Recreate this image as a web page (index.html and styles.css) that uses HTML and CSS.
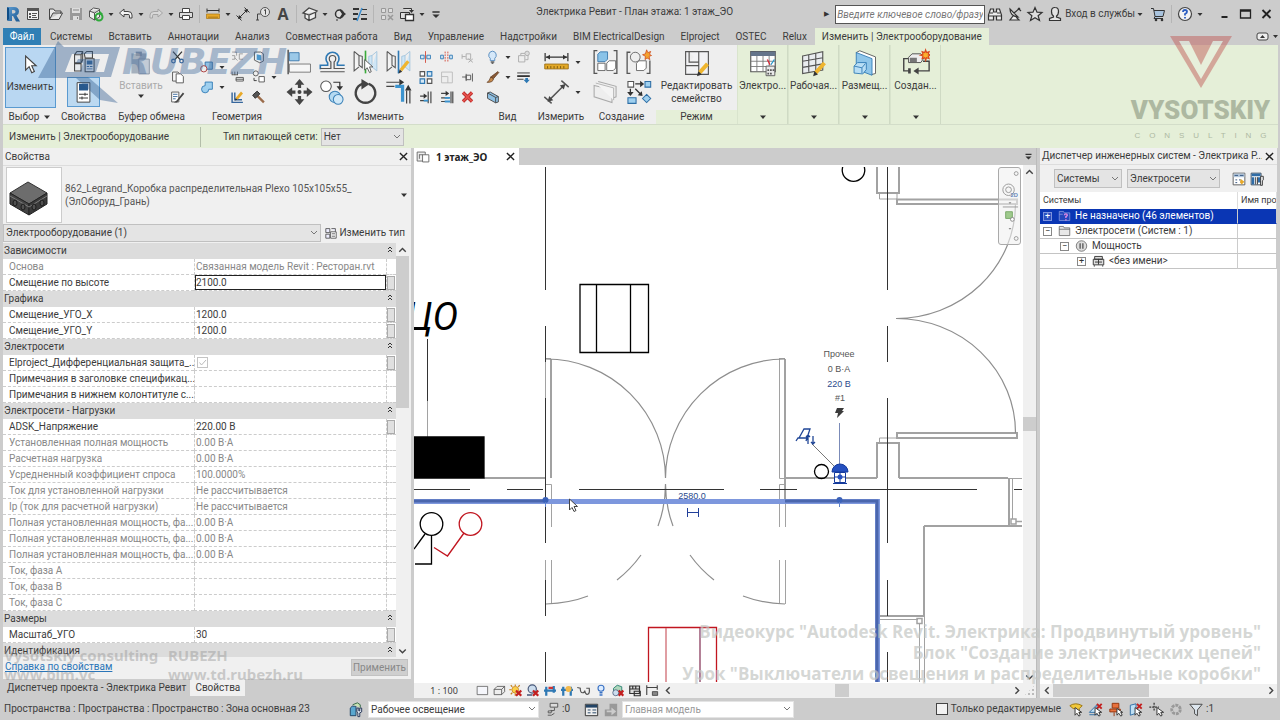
FILE: index.html
```html
<!DOCTYPE html>
<html lang="ru">
<head>
<meta charset="utf-8">
<title>Электрика Ревит - План этажа: 1 этаж_ЭО</title>
<link rel="stylesheet" href="styles.css">
</head>
<body>
<svg class="defs" aria-hidden="true">
  <defs>
    <linearGradient id="rg" x1="0" y1="0" x2="1" y2="1"><stop offset="0" stop-color="#5d9bd0"/><stop offset="1" stop-color="#17558f"/></linearGradient>
    <symbol id="revit" viewBox="0 0 20 20"><path fill="url(#rg)" fill-rule="evenodd" d="M5 3h6q5 0 5 4.500q0 3-2.500 4l3.500 6h-4l-3-5.500H9V17H5zM9 6v3.500h1.500q2 0 2-1.700T10.500 6z"/><path fill="#0f4d86" d="M4 3l2 1v11l-2 2z"/></symbol>
    <symbol id="list" viewBox="0 0 20 20"><path fill="#f2f2f2" stroke="#444" d="M4.500 4.500h11v11h-11z"/><path fill="#555" d="M4 4h12v3H4zM6 9h2v2H6zM6 12h2v2H6zM9 9h5v1H9zM9 11h4v1H9zM9 13h5v1H9z"/></symbol>
    <symbol id="open" viewBox="0 0 20 20"><path fill="#e8e8e8" stroke="#444" d="M3.500 15V5h4l1.500 2h6v2H7L3.500 15.500H13L16.500 9H14"/></symbol>
    <symbol id="save" viewBox="0 0 20 20"><path fill="#999" d="M4 4h12v12H4z"/><path fill="#ddd" d="M6 4h8v5H6zM7 12h6v4H7z"/><path fill="#888" d="M7 5.500h6v1H7zM11 13h1v2h-1z"/></symbol>
    <symbol id="sync" viewBox="0 0 20 20"><path fill="#eee" stroke="#555" d="M3.500 7l4-3 6 1v8l-5 3-5-3zM3.500 7l5 2 5-3M8.500 9v7"/><circle cx="13" cy="13" r="3.500" fill="none" stroke="#2eaa3a" stroke-width="2"/><path fill="#2eaa3a" d="M14 7l3 3-4 1z"/></symbol>
    <symbol id="undo" viewBox="0 0 20 20"><path fill="#f4f4f4" stroke="#444" stroke-linejoin="round" d="M3.500 9L8 5v2.500h4q4 0 4 3.500v3h-2.500v-2.500q0-1-1.500-1H8V13z"/></symbol>
    <symbol id="redo" viewBox="0 0 20 20"><path fill="#d8d8d8" stroke="#a4a4a4" stroke-linejoin="round" d="M16.500 9L12 5v2.500H8q-4 0-4 3.500v3h2.500v-2.500q0-1 1.500-1h4V13z"/></symbol>
    <symbol id="print" viewBox="0 0 20 20"><path fill="#fff" stroke="#444" d="M6.500 8V4.500h7V8"/><path fill="#ddd" stroke="#444" d="M3.500 8.500h13v5h-13z"/><path fill="#fff" stroke="#444" d="M6.500 11.500h7v4h-7z"/></symbol>
    <symbol id="meas" viewBox="0 0 20 20"><path stroke="#333" d="M4 6.500h12M4 4.500v4M16 4.500v4"/><path fill="#e8a928" stroke="#a87716" stroke-width=".7" d="M3.500 10h13v4.500h-13z"/><path stroke="#6d4c0b" stroke-width=".7" d="M6 12.500V14M8 12.500V14M10 12.500V14M12 12.500V14M14 12.500V14"/></symbol>
    <symbol id="dim" viewBox="0 0 20 20"><path stroke="#333" fill="none" d="M6 14L14 6M3.500 11.500l5 5M11.500 3.500l5 5"/><path fill="#333" d="M5 15l1-4 3 3zM15 5l-1 4-3-3z"/></symbol>
    <symbol id="tag" viewBox="0 0 20 20"><circle cx="12" cy="8" r="4.500" fill="#e4e4e4" stroke="#555"/><path stroke="#444" fill="none" d="M4.500 16v-6h3M12.500 10.500v-5l-1.500 1M3 16h3"/></symbol>
    <symbol id="cube3" viewBox="0 0 20 20"><path fill="#eee" stroke="#444" stroke-width="1.300" d="M3 9l6-5 8 3-1.500 1.500v5L9 16.500 5 14V9.500zM5 9.500l4 1.500 7-3M9 11v5"/></symbol>
    <symbol id="sect" viewBox="0 0 20 20"><circle cx="9.500" cy="10" r="4" fill="#ddd" stroke="#333" stroke-width="1.500"/><path fill="#333" d="M10 5l6 5-6 5v-2l2-3-2-3z"/><path stroke="#333" d="M7 15v2"/></symbol>
    <symbol id="thin" viewBox="0 0 20 20"><path stroke="#333" stroke-width="2" d="M3 5h6M3 10h5M3 15h4M11 15h6"/><path stroke="#333" d="M12 5.500h5M11 10.500h6"/><path stroke="#3d8fd0" stroke-width="1.500" d="M12 4L7 17"/></symbol>
    <symbol id="closeh" viewBox="0 0 20 20"><path fill="#ddd" stroke="#999" d="M4.500 4.500h4v4h-4zM11.500 4.500h4v4h-4zM4.500 11.500h4v4h-4z"/><path stroke="#999" stroke-width="1.500" d="M11 11l5 5M16 11l-5 5"/></symbol>
    <symbol id="switch" viewBox="0 0 20 20"><path fill="#ddd" stroke="#333" d="M3.500 8.500h9v6h-9zM6.500 5V4.500h8V8"/><path fill="#fff" stroke="#333" stroke-width="1.300" d="M8.500 10.500h8v6h-8z"/><path fill="#333" d="M12 6h5l-2.500 3z"/></symbol>
    <symbol id="dd" viewBox="0 0 10 20"><path fill="#333" d="M2.500 9h5L5 12z"/></symbol>
    <symbol id="tri" viewBox="0 0 8 8"><path fill="#333" d="M1 2.500h6L4 6z"/></symbol>
    <symbol id="up2" viewBox="0 0 8 8"><path fill="none" stroke="#333" d="M2 4l2-2 2 2M2 7l2-2 2 2"/></symbol>
    <symbol id="qmenu" viewBox="0 0 20 20"><path fill="#333" d="M6 7h8v1.500H6zM6 10.500h8L10 14.500z"/></symbol>
    <symbol id="bino" viewBox="0 0 20 20"><path fill="#eee" stroke="#333" stroke-width="1.200" d="M5.500 5h3v3h3V5h3l2 6v5h-5v-4h-3v4h-5v-5zM5 9h3M12 9h3M4 12h4M12 12h4"/></symbol>
    <symbol id="sat" viewBox="0 0 20 20"><path fill="#eee" stroke="#333" stroke-width="1.200" d="M5 5q0 7 8 8zM8 12l-3 4h9l-3-3M9 9l6-5M13 4l3 3"/></symbol>
    <symbol id="star" viewBox="0 0 20 20"><path fill="#ddd" stroke="#333" stroke-width="1.200" d="M10 3.500l2 4.700 5 .3-3.900 3.200 1.400 4.800L10 13.800l-4.500 2.700 1.400-4.800L3 8.500l5-.3z"/></symbol>
    <symbol id="user" viewBox="0 0 20 20"><path fill="#e4e4e4" stroke="#333" stroke-width="1.200" d="M10 3.500q3.500 0 3.500 3.700T11.500 12v1l4 1.500v2h-11v-2l4-1.500v-1q-2-1-2-4.800T10 3.500z"/></symbol>
    <symbol id="cart" viewBox="0 0 20 20"><path fill="#a9c3dd" stroke="#333" d="M3 4.500h2.500L7 12.500h8L16.500 6.500H6M7 12.500l-1 2h9"/><circle cx="8" cy="16" r="1.300" fill="#333"/><circle cx="14" cy="16" r="1.300" fill="#333"/></symbol>
    <symbol id="help" viewBox="0 0 20 20"><circle cx="10" cy="10" r="6.500" fill="#f3f3f3" stroke="#444" stroke-width="1.200"/><path fill="none" stroke="#2d5ec0" stroke-width="1.800" d="M8 8q0-2 2-2t2 1.800q0 1.200-2 2.200v1.500M10 13v1.500"/></symbol>

    <symbol id="arrow" viewBox="0 0 32 32"><path fill="#fff" stroke="#444" stroke-width="1.300" d="M11 7v16l4-4 3 7 3-1.500-3-6.500h5z"/></symbol>
    <symbol id="props1" viewBox="0 0 32 32"><path fill="#e6e9ec" stroke="#444" stroke-width="1.300" d="M5 7l3-4h7v11l-2 3H5zM17 6l3-3h7v8h-9zM5 18h8v9H5zM5 7h8v9M13 7l2-4"/><path fill="#fff" stroke="#444" stroke-width="1.300" d="M18 12h11v16H18z"/><path fill="#36669c" d="M20 14h7v5h-7zM20 21h3v1h-3zM24 21h3v1h-3zM20 24h7v1h-7z"/></symbol>
    <symbol id="props2" viewBox="0 0 32 32"><path fill="#fff" stroke="#444" stroke-width="1.300" d="M7.500 3.500h17v26h-17z"/><path fill="#27588d" d="M10 5h12v9H10z"/><path stroke="#333" stroke-width="1.300" d="M10 19h12M10 24h12M18 17v4M14 22v4"/></symbol>
    <symbol id="paste" viewBox="0 0 32 32"><path fill="#a5b0bd" d="M5 5h17v23H5z"/><path fill="#8894a5" d="M10 3h7v5h-7z"/><path fill="#c3cbd6" stroke="#8490a1" d="M13.500 11.500h12v17h-12z"/></symbol>
    <symbol id="cut" viewBox="0 0 20 20"><path stroke="#333" stroke-width="1.400" fill="none" d="M5 4l8 9M15 4l-8 9"/><circle cx="5.500" cy="14.500" r="2" fill="none" stroke="#36669c" stroke-width="1.400"/><circle cx="14.500" cy="14.500" r="2" fill="none" stroke="#36669c" stroke-width="1.400"/></symbol>
    <symbol id="copy" viewBox="0 0 20 20"><path fill="#f6f6f6" stroke="#555" d="M4.500 4.500h6l2 2v8h-8z"/><path fill="#fff" stroke="#555" d="M8.500 6.500h5l3 3v7h-8z"/></symbol>
    <symbol id="match" viewBox="0 0 20 20"><path fill="#fff" stroke="#555" d="M3.500 4.500h8v11h-8z"/><path stroke="#36669c" d="M5 7h5M5 9.500h5M5 12h3"/><path fill="#444" d="M16 5l1.500 1.500-6 7-2 2.500H6l3-2z"/></symbol>
    <symbol id="cope" viewBox="0 0 20 20"><path fill="#8fc1e5" stroke="#2f6fa6" d="M8.500 4.500h8v8h-8z"/><circle cx="7" cy="12" r="3.500" fill="#eee" stroke="#a33"/></symbol>
    <symbol id="join" viewBox="0 0 20 20"><path fill="#9fd0ef" stroke="#2f79b4" d="M8.500 4.500h8v8h-4a4 4 0 1 1-4-4z"/></symbol>
    <symbol id="wjoin" viewBox="0 0 20 20"><path fill="none" stroke="#999" d="M4 4.500h5v4M4 8.500h3v4h-3M16 6.500h-4v6h4M7 11l3 3"/></symbol>
    <symbol id="face" viewBox="0 0 20 20"><path fill="#e8eef3" stroke="#555" d="M5.500 4.500h7l3 2v8l-4 2-6-3z"/><path fill="#4b98cd" d="M8 7l5 1v6l-5-1z"/></symbol>
    <symbol id="beam" viewBox="0 0 20 20"><path fill="none" stroke="#555" d="M4 4v4M7 4v4M10 4v4M4 7.500h6M8.500 10.500h8v4h-8zM8 12.500h9"/></symbol>
    <symbol id="geo" viewBox="0 0 20 20"><circle cx="7" cy="6" r="2.800" fill="none" stroke="#555"/><path fill="#fff" stroke="#555" d="M10.500 9.500h6v6h-6z"/><path fill="none" stroke="#333" d="M5 11v3h3"/></symbol>
    <symbol id="edit" viewBox="0 0 20 20"><path fill="none" stroke="#36669c" stroke-width="1.600" d="M4 5v11h12M7 5v8h8"/><path stroke="#e8a928" stroke-width="3" d="M9 12l6-7"/><path fill="#333" d="M7 14l1-3 2 2z"/></symbol>
    <symbol id="hammer" viewBox="0 0 20 20"><path stroke="#9a6b4a" stroke-width="2.600" d="M9 9l7 7"/><path fill="#555" stroke="#222" d="M3.500 8l5-4.500 3 3-5 5z"/></symbol>
    <symbol id="align" viewBox="0 0 32 32"><path stroke="#333" stroke-width="1.500" d="M2 1v30"/><path fill="#9cc9e8" stroke="#2f6fa6" d="M3.500 4.500h12v10h-12z"/><path fill="#f6f6f6" stroke="#666" d="M3.500 18.500h26v10h-26z"/></symbol>
    <symbol id="offset" viewBox="0 0 32 32"><path fill="none" stroke="#2f79b4" stroke-width="2" d="M1 25V20h9v-3q-2-2-2-5a8 8 0 0 1 16 0q0 3-2 5v3h9"/><path fill="none" stroke="#555" stroke-width="1.500" d="M1 24h13v-8q-2-1-2-4a4 4 0 0 1 8 0q0 3-2 4v8h13M1 28h30"/></symbol>
    <symbol id="mir1" viewBox="0 0 32 32"><path fill="#f4f4f4" stroke="#555" stroke-width="1.300" d="M2 3l6 5v12l4 3V9l-4-1M2 3v24l6-5"/><path fill="#cfe6f6" stroke="#9cc0da" d="M30 3l-6 5v12l-4 3V9l4-1M30 3v24l-6-5"/><path stroke="#3aaa3a" stroke-width="2" d="M16 2v28"/><path fill="#fff" stroke="#444" d="M15 13v13l3-3 3 6 2-1-2-6h4z"/></symbol>
    <symbol id="mir2" viewBox="0 0 32 32"><path fill="#f4f4f4" stroke="#555" stroke-width="1.300" d="M2 3l6 5v12l4 3V9l-4-1M2 3v24l6-5"/><path fill="#cfe6f6" stroke="#9cc0da" d="M30 3l-6 5v12l-4 3V9l4-1M30 3v24l-6-5"/><path stroke="#2f79b4" stroke-width="2" d="M16 2v28"/><path stroke="#efb52e" stroke-width="4" d="M19 26l9-11"/><path fill="#333" d="M16 30l1.500-5 3 3z"/></symbol>
    <symbol id="move" viewBox="0 0 32 32"><path fill="#444" d="M16 0l6 7h-4v4h-4V7h-4zM16 32l6-7h-4v-4h-4v4h-4zM0 16l7-6v4h4v4H7v4zM32 16l-7-6v4h-4v4h4v4z"/><circle cx="16" cy="16" r="2.500" fill="#444"/></symbol>
    <symbol id="copyel" viewBox="0 0 32 32"><circle cx="8" cy="9" r="6.500" fill="#fff" stroke="#555" stroke-width="1.300"/><circle cx="19" cy="22" r="7" fill="#b4d9f1" stroke="#3c82b8" stroke-width="1.300"/><circle cx="23" cy="25" r="6" fill="#cfe8f8" stroke="#3c82b8" stroke-width="1.300"/><path fill="none" stroke="#333" stroke-width="1.500" d="M17 4h8v6"/><path fill="#333" d="M21 9h8l-4 5z"/></symbol>
    <symbol id="rot" viewBox="0 0 32 32"><path fill="none" stroke="#444" stroke-width="3" d="M20 6a12 12 0 1 1-8 0"/><path fill="#444" d="M11 0l10 6-10 7z"/></symbol>
    <symbol id="trimc" viewBox="0 0 32 32"><path fill="none" stroke="#444" stroke-width="1.500" d="M1 4h16M1 9h10M26 30V14M30 30V14"/><path fill="none" stroke="#3c94cf" stroke-width="4" d="M12 9h9v19"/><path fill="#333" d="M17 0l6 4-6 4zM24 14l4-7 4 7z"/></symbol>
    <symbol id="split" viewBox="0 0 20 20"><path fill="#d7e9f6" stroke="#2f79b4" d="M4.500 8h4v4h-4zM11.500 8h4v4h-4z"/><path stroke="#d24a3a" d="M10 3.500v13"/></symbol>
    <symbol id="splitg" viewBox="0 0 20 20"><path fill="#d7e9f6" stroke="#2f79b4" d="M3.500 8h3v4h-3zM13.500 8h3v4h-3z"/><path stroke="#d24a3a" stroke-dasharray="2 1" d="M8.500 4v12M11.500 4v12"/></symbol>
    <symbol id="unpin" viewBox="0 0 20 20"><path fill="#eee" stroke="#aaa" d="M4 7v5M8.500 6.500h5v6h-5zM4 9.500h4M11 12l5 4M16 12l-5 4"/></symbol>
    <symbol id="array" viewBox="0 0 20 20"><path fill="#fff" stroke="#555" stroke-width="1.300" d="M4 4h5v5H4zM12 12h5v5h-5z"/><path fill="#d7e9f6" stroke="#2f79b4" stroke-width="1.300" d="M12 4h5v5h-5zM4 12h5v5H4z"/></symbol>
    <symbol id="scale" viewBox="0 0 20 20"><path fill="#eee" stroke="#bbb" d="M4.500 4.500h12v12h-12zM4.500 9.500h7v7"/></symbol>
    <symbol id="pin" viewBox="0 0 20 20"><path fill="#eee" stroke="#555" d="M4 10h5M8.500 6.500v8M8.500 8h5v5h-5zM15.500 6v9"/></symbol>
    <symbol id="trim1" viewBox="0 0 20 20"><path fill="none" stroke="#444" stroke-width="1.300" d="M4 9h5M13 4v13M16 4v13M4 14h9"/><path fill="#333" d="M8 6l4 3-4 3z"/><path stroke="#3c94cf" stroke-width="2" d="M8 14h5"/></symbol>
    <symbol id="trim2" viewBox="0 0 20 20"><path fill="none" stroke="#444" stroke-width="1.300" d="M4 6h6M15 4v13M17 4v13M4 11h9M4 15h9"/><path fill="#333" d="M9 3l4 3-4 3z"/><path stroke="#3c94cf" stroke-width="2" d="M8 11h6M8 15h6"/></symbol>
    <symbol id="del" viewBox="0 0 20 20"><path stroke="#b41f1f" stroke-width="3.600" d="M5 5l10 10M15 5L5 15"/><path stroke="#e4514b" stroke-width="2" d="M5 5l10 10M15 5L5 15"/></symbol>
    <symbol id="bulb" viewBox="0 0 20 20"><path fill="#d5e8f9" stroke="#5088bd" d="M10 3.500a4.500 4.500 0 0 1 2.500 8V14h-5v-2.500a4.500 4.500 0 0 1 2.500-8z"/><path stroke="#666" stroke-width="1.500" d="M8 15.500h4M9 17h2"/></symbol>
    <symbol id="boxes" viewBox="0 0 20 20"><path fill="#eee" stroke="#aaa" d="M4.500 8.500h7v7h-7zM7 8V6h8v7h-3"/><circle cx="14" cy="6" r="2.500" fill="#ddd" stroke="#aaa"/></symbol>
    <symbol id="brush" viewBox="0 0 20 20"><path fill="#8a5a36" stroke="#5a371d" stroke-width=".8" d="M16 4l1 1-6 7-3-2z"/><path fill="#c68a4c" stroke="#5a371d" stroke-width=".8" d="M8 10l3 2q0 4-7 4 3-2 4-6z"/></symbol>
    <symbol id="lw" viewBox="0 0 20 20"><path stroke="#333" d="M3 5.500h14"/><path stroke="#333" stroke-width="2" d="M3 9h14"/><path stroke="#333" d="M3 12.500h7"/><path fill="#2f79b4" d="M12 11h3v2h2l-3.500 4-3.500-4h2z"/></symbol>
    <symbol id="cutp" viewBox="0 0 20 20"><path fill="#8fc1e5" stroke="#444" d="M4.500 5.500l3-1 9 5v6l-3 1-9-5zM4.500 5.500l9 5v6M13.500 10.500l3-1"/></symbol>
    <symbol id="ruler" viewBox="0 0 32 32"><path stroke="#333" stroke-width="1.500" d="M3 10h26M2 5v10M30 5v10"/><path fill="#333" d="M3 10l5-3v6zM29 10l-5-3v6z"/><path fill="#e3a928" stroke="#96690e" d="M1.500 18.500h29v6h-29z"/><path stroke="#6d4c0b" d="M5 21v3M9 21v3M13 21v3M17 21v3M21 21v3M25 21v3"/></symbol>
    <symbol id="dimbig" viewBox="0 0 32 32"><path stroke="#555" stroke-width="1.800" d="M7 26L25 8M1 22l9 8M22 2l9 8"/><path fill="#444" d="M5 28l2-7 5 5zM27 6l-2 7-5-5z"/></symbol>
    <symbol id="grp" viewBox="0 0 32 32"><path fill="none" stroke="#555" stroke-width="1.600" d="M6 2H2v28h4M26 2h4v28h-4"/><path fill="#8ac3e8" stroke="#2f6fa6" d="M6.500 6.500l3-3h9v9l-3 3h-9z"/><path fill="#fff" stroke="#555" d="M6.500 17.500h9v9h-9zM17.500 17.500l3-3h8v9l-3 3h-8z"/></symbol>
    <symbol id="asm" viewBox="0 0 32 32"><path fill="none" stroke="#555" stroke-width="1.600" d="M6 4H2v26h4M26 30h4V14"/><circle cx="12" cy="10" r="6" fill="#eee" stroke="#555"/><path fill="#fff" stroke="#555" d="M13.500 17.500l3-3h9v9l-3 3h-9z"/><path fill="#f4a22e" stroke="#cf4d1e" d="M26 1l1.500 3.500L31 3l-1.500 3.500L32 8l-3 1 1 4-3.500-2L24 13l.5-4L21 7l3.500-1z"/></symbol>
    <symbol id="parts" viewBox="0 0 32 32"><path fill="#eee" stroke="#aaa" stroke-width="1.300" d="M7 3l22 6v13l-3 1M2 8l22 5v16L2 22z"/><path fill="#f4f4f4" stroke="#aaa" d="M4 5l22 6v15"/></symbol>
    <symbol id="sim" viewBox="0 0 32 32"><path fill="#fff" stroke="#555" stroke-width="1.300" d="M3 3h7v7H3z"/><path fill="#9fd0ef" stroke="#2f6fa6" stroke-width="1.300" d="M24 3h7v7h-7zM3 23h10v7H3zM26 19l5 5-5 5-5-5z"/><path stroke="#333" stroke-width="1.600" d="M12 6h7M6 12v7M12 12l7 7"/><path fill="#333" d="M18 2l5 4-5 4zM2 16h8l-4 5zM21 21l-1-6-5 5z"/></symbol>
    <symbol id="famedit" viewBox="0 0 32 32"><path fill="#f2f2f4" stroke="#555" stroke-width="1.300" d="M3 3h15v16H3zM18 3h11v26H3V19M18 19v6M7 3v12h11"/><path stroke="#efb52e" stroke-width="4.500" d="M19 27l9-10"/><path fill="#333" d="M16 31l1.500-6 4 4z"/></symbol>
    <symbol id="sched" viewBox="0 0 32 32"><path fill="#fff" stroke="#555" stroke-width="1.300" d="M2 3h28v23H2z"/><path fill="#65758b" d="M2 3h28v5H2z"/><path stroke="#777" fill="none" d="M2 14h28M2 20h28M9 8v18M16 8v18M23 8v18"/><path fill="#e9e9e9" stroke="#555" d="M19.500 19.500h10v11h-10z"/><path fill="#555" d="M21 23h2v2h-2zM24 23h2v2h-2zM27 23h2v2h-2zM21 27h2v2h-2zM24 27h2v2h-2z"/><path stroke="#d23" stroke-width="1.500" d="M21 12l3 6"/><path stroke="#29c" stroke-width="1.500" d="M29 12l-4 6"/></symbol>
    <symbol id="wplane" viewBox="0 0 32 32"><path fill="#e9ecef" stroke="#555" stroke-width="1.300" d="M3 8l23-5v21L3 28zM3 14l23-4M3 21l23-4M10 7v19M18 5v20"/><path stroke="#efb52e" stroke-width="4.500" d="M18 27l10-11"/><path fill="#333" d="M15 31l1.500-6 4 4z"/></symbol>
    <symbol id="place" viewBox="0 0 32 32"><path fill="#fff" stroke="#555" d="M6 4l4-2 18 7v19l-4 1z"/><path fill="#8fc6ea" stroke="#2f79b4" d="M6 4l18 7v19L6 23z"/><path fill="#b8def5" stroke="#2f79b4" d="M3.500 19.500l4-4h10v8l-4 5-10-1zM3.500 19.500l9 2v6M12.500 21.500l4-5"/></symbol>
    <symbol id="syst" viewBox="0 0 32 32"><path fill="none" stroke="#444" stroke-width="1.600" d="M7 11H2v14h7M24 14h7v11H16"/><path fill="#444" d="M7 22h3v6H7zM19 21v8l-6-4z"/><path fill="#eee" stroke="#444" d="M7.500 9.500l4-4h10l4 4-4 6h-14z"/><path fill="#777" d="M9 10h8v5H9z"/><path fill="#fbb02e" stroke="#d94a1e" stroke-width="1.300" d="M27 1l1 3 3-1-1 3 3 1-3 1 1 3-3-1-1 3-1-3-3 1 1-3-3-1 3-1-1-3 3 1z"/></symbol>

    <symbol id="plan" viewBox="0 0 20 20"><path fill="#eee" stroke="#666" d="M3.500 4.500h9v10h-9zM6 7.500h4M6 7v5"/><path fill="#fff" stroke="#666" d="M9.500 7.500h7v8h-7z"/></symbol>
    <symbol id="etype" viewBox="0 0 20 20"><path fill="#eef" stroke="#444" d="M3.500 4.500h5v5h-5zM3.500 11.500h5v5h-5zM10.500 4.500h5v4"/><path fill="#fff" stroke="#444" d="M9.500 8.500h7v8h-7zM11 11h4M11 14h4"/></symbol>
    <symbol id="tb1" viewBox="0 0 20 20"><path fill="#fff" stroke="#555" d="M3.500 3.500h13v13h-13z"/><path fill="#b5c9dd" d="M4 4h12v4H4z"/><path stroke="#2a4c79" d="M5 6h4M11 6h4M6 11h2M6 14h2M10 11h2"/><path fill="#e8a928" d="M12 10l4 3-3 3-2-2z"/></symbol>
    <symbol id="tb2" viewBox="0 0 20 20"><path fill="#fff" stroke="#345" d="M3.500 3.500h11v13h-11z"/><path fill="#2f6ca6" d="M4 4h10v3H4zM4 8h3v8H4zM11 8h3v6h-3z"/><path stroke="#333" fill="none" d="M8.500 8v8M10.500 8v8"/><path fill="#eee" stroke="#333" d="M14 7h3v4l-1 1v5h-2v-5z"/></symbol>
    <symbol id="folder" viewBox="0 0 20 20"><path fill="#e8e8e8" stroke="#555" d="M2.500 16.500v-13h6l1 2h8v11zM2.500 7.500h15"/></symbol>
    <symbol id="folderq" viewBox="0 0 20 20"><path fill="#2447bd" stroke="#93a5e4" d="M2.500 16.500v-13h6l1 2h8v11zM2.500 7.500h5"/><path fill="none" stroke="#e48ae4" stroke-width="2" d="M10 9q0-2 2-2t2 2q0 1-2 2v2M12 14.500v2"/></symbol>
    <symbol id="power" viewBox="0 0 20 20"><circle cx="10" cy="10" r="7.500" fill="#ddd" stroke="#555"/><path stroke="#333" stroke-width="1.500" d="M8 6v8M12 6v8"/></symbol>
    <symbol id="panelb" viewBox="0 0 20 20"><path fill="#ddd" stroke="#333" stroke-width="1.300" d="M4.500 3.500h11v4h-11zM2.500 7.500h15v8h-15zM4 18v-2M16 18v-2M5 11.500h10M10 7v8"/></symbol>

    <symbol id="v1" viewBox="0 0 20 20"><path fill="#f5f6fb" stroke="#555" d="M3.500 4.500h14v11h-14z"/></symbol>
    <symbol id="v2" viewBox="0 0 20 20"><path fill="#eee" stroke="#444" d="M3.500 8.500l4-4h10v7l-4 4h-10zM3.500 8.500h10v7M13.500 8.500l4-4"/></symbol>
    <symbol id="v3" viewBox="0 0 20 20"><circle cx="9" cy="9" r="4.500" fill="#fad04c" stroke="#c47e18"/><path stroke="#c47e18" stroke-width="1.500" d="M9 2v2M4 9H1M3 3l2 2M15 3l-2 2M9 14v3M3 15l2-2"/><path stroke="#c31f1f" stroke-width="3" d="M10 10l7 7M17 10l-7 7"/></symbol>
    <symbol id="v4" viewBox="0 0 20 20"><circle cx="9" cy="8" r="5.500" fill="#cde" stroke="#457" stroke-width="1.500"/><path stroke="#457" stroke-width="2" d="M2 16h7"/><path stroke="#c31f1f" stroke-width="3" d="M10 10l7 7M17 10l-7 7"/></symbol>
    <symbol id="v5" viewBox="0 0 20 20"><path fill="none" stroke="#2f79b4" stroke-width="3" d="M2 10h16M5 5v12M15 4v9"/><path fill="#c33" d="M8 5h6v3H8z"/></symbol>
    <symbol id="v6" viewBox="0 0 20 20"><path fill="none" stroke="#2f79b4" stroke-width="3" d="M2 9h16M5 5v12M15 5v12"/><circle cx="12" cy="8" r="4" fill="#f3b94a"/></symbol>
    <symbol id="v7" viewBox="0 0 20 20"><path fill="none" stroke="#555" stroke-width="1.600" d="M1 6l4 1q0 6 3 6t3-3q1 6 4 5t2-8h-4"/></symbol>
    <symbol id="v8" viewBox="0 0 20 20"><circle cx="10" cy="7" r="4" fill="#dcecff" stroke="#3a72c4" stroke-width="1.500"/><path stroke="#3a72c4" stroke-width="2" d="M8 13h4M8 16h4"/></symbol>
    <symbol id="v9" viewBox="0 0 20 20"><path fill="#aed6bb" stroke="#387" stroke-width="1.300" d="M4 7l5-4 6 2v6l-5 4-6-2z"/><circle cx="7" cy="13" r="4" fill="#cde" stroke="#457"/><path stroke="#c31f1f" stroke-width="3" d="M11 10l6 7M17 10l-6 7"/></symbol>
    <symbol id="v10" viewBox="0 0 20 20"><path fill="#ddd" stroke="#333" stroke-width="1.600" d="M3 4h13v10H3zM3 8h13M7 4v4M11 4v4M9 11h8v6H9z"/></symbol>
    <symbol id="v11" viewBox="0 0 20 20"><path fill="none" stroke="#444" stroke-width="1.500" d="M3 6h14M3 3v13M17 3v6"/><path fill="#888" stroke="#333" d="M10.500 11.500h7v5h-7z"/></symbol>
    <symbol id="s1" viewBox="0 0 20 20"><path fill="#5aa7cf" stroke="#246" d="M4.500 8.500l2-2h4v10h-6z"/><path fill="#c9e3b4" stroke="#364" d="M7 5l5-2 3 2v3"/><path fill="#e8eef5" stroke="#235" d="M11.500 8.500h2v3h1v-3h2v4l-2 1v4h-2v-4l-1-1z"/></symbol>
    <symbol id="s2" viewBox="0 0 20 20"><path fill="#ddd" stroke="#555" d="M7.500 3.500h8v4h-8zM12 8v3H8M5.500 11.500h4l-1 2h-3zM5 16q4 1 7-2"/></symbol>
    <symbol id="s3" viewBox="0 0 20 20"><path fill="#eee" stroke="#333" d="M3.500 4.500h13v12h-13z"/><path fill="#246" d="M4 5h12v3H4z"/><path stroke="#246" d="M6 10.500h3M6 13.500h3M11 10.500h4M11 13.500h4"/></symbol>
    <symbol id="s4" viewBox="0 0 20 20"><path fill="#999" d="M4 10h5V4h8v13H4z"/><path fill="#ccc" d="M6 11h5V8l5 4-5 4v-3H6z"/></symbol>
    <symbol id="t1" viewBox="0 0 20 20"><path fill="#f1c83a" stroke="#9a7511" d="M3.500 6q6-4 13 0l-3 3v5h-3V9H7z"/><path fill="#fff" stroke="#333" d="M9 8v8l2-2 2 3 1.500-1-1.500-3h3z"/></symbol>
    <symbol id="t2" viewBox="0 0 20 20"><path fill="#bfe0f4" stroke="#2f6fa6" d="M3 13l8-8v8zM3 15.500h10"/><path stroke="#c31f1f" stroke-width="2" d="M11 4l5 5M16 4l-5 5"/><path fill="#fff" stroke="#333" d="M9 8v8l2-2 2 3 1.500-1-1.500-3h3z"/></symbol>
    <symbol id="t3" viewBox="0 0 20 20"><path fill="#e8703c" stroke="#93350e" d="M6 3.500h7v5H6zM3.500 9.500h11v3h-11zM8 13v4"/><path fill="#fff" stroke="#333" d="M11 9v7l2-2 2 3 1.500-1-1.500-3h2z"/></symbol>
    <symbol id="t4" viewBox="0 0 20 20"><path fill="#bfe0f4" stroke="#2f6fa6" d="M4 5.500l6-1.500v10l-6 2z"/><path stroke="#c31f1f" stroke-width="2" d="M11 4l5 5M16 4l-5 5"/><path fill="#fff" stroke="#333" d="M9 8v8l2-2 2 3 1.500-1-1.500-3h3z"/></symbol>
    <symbol id="t5" viewBox="0 0 20 20"><path stroke="#333" stroke-width="1.300" stroke-dasharray="2 1" d="M8 3v9M3 7.500h10"/><path fill="#fff" stroke="#333" d="M11 8v8l2-2 2 3 1.500-1-1.500-3h3z"/></symbol>
    <symbol id="t6" viewBox="0 0 20 20"><circle cx="10" cy="10" r="4.500" fill="none" stroke="#999" stroke-width="3" stroke-dasharray="3 1"/></symbol>
    <symbol id="t7" viewBox="0 0 20 20"><path fill="#dde6ee" stroke="#444" d="M3.500 4.500h13l-5 6v6l-3-2v-4z"/></symbol>
  </defs>
</svg>

<header class="titlebar">
  <div class="quick">
    <button aria-label="Revit"><svg><use href="#revit"/></svg></button>
    <button aria-label="Меню" class="after"><svg><use href="#list"/></svg></button>
    <button aria-label="Открыть"><svg><use href="#open"/></svg></button>
    <button aria-label="Сохранить"><svg><use href="#save"/></svg></button>
    <button aria-label="Синхронизация"><svg><use href="#sync"/></svg></button><button class="dd" aria-label="Ещё"><svg><use href="#dd"/></svg></button>
    <button aria-label="Отменить"><svg><use href="#undo"/></svg></button><button class="dd" aria-label="Ещё"><svg><use href="#dd"/></svg></button>
    <button aria-label="Повторить"><svg><use href="#redo"/></svg></button><button class="dd" aria-label="Ещё"><svg><use href="#dd"/></svg></button>
    <button aria-label="Печать"><svg><use href="#print"/></svg></button>
    <i class="sep"></i>
    <button aria-label="Измерить"><svg><use href="#meas"/></svg></button><button class="dd" aria-label="Ещё"><svg><use href="#dd"/></svg></button>
    <button aria-label="Размер"><svg><use href="#dim"/></svg></button>
    <button aria-label="Марка"><svg><use href="#tag"/></svg></button>
    <button class="letter">A</button>
    <i class="sep"></i>
    <button aria-label="3D"><svg><use href="#cube3"/></svg></button><button class="dd" aria-label="Ещё"><svg><use href="#dd"/></svg></button>
    <button aria-label="Разрез"><svg><use href="#sect"/></svg></button>
    <button aria-label="Тонкие линии"><svg><use href="#thin"/></svg></button>
    <i class="sep"></i>
    <button aria-label="Закрыть окна"><svg><use href="#closeh"/></svg></button>
    <button aria-label="Окна"><svg><use href="#switch"/></svg></button><button class="dd" aria-label="Ещё"><svg><use href="#dd"/></svg></button>
    <button class="qm" aria-label="Настройка"><svg><use href="#qmenu"/></svg></button>
  </div>
  <h1>Электрика Ревит - План этажа: 1 этаж_ЭО</h1>
  <div class="service">
    <span class="tri">▶</span>
    <input class="search" type="text" aria-label="Поиск" placeholder="Введите ключевое слово/фразу">
    <button aria-label="Найти"><svg><use href="#bino"/></svg></button>
    <button aria-label="Связь"><svg><use href="#sat"/></svg></button>
    <button aria-label="Избранное"><svg><use href="#star"/></svg></button>
    <button aria-label="Пользователь"><svg><use href="#user"/></svg></button>
    <button class="login">Вход в службы</button><button class="dd" aria-label="Ещё"><svg><use href="#dd"/></svg></button>
    <button class="cart" aria-label="Магазин"><svg><use href="#cart"/></svg></button>
    <i class="sep"></i>
    <button aria-label="Справка"><svg><use href="#help"/></svg></button><button class="dd last" aria-label="Ещё"><svg><use href="#dd"/></svg></button>
    <button class="win" aria-label="Свернуть"><svg viewBox="0 0 20 20"><path stroke="#222" stroke-width="2" d="M7 13h6"/></svg></button>
    <button class="win" aria-label="Развернуть"><svg viewBox="0 0 20 20"><path fill="none" stroke="#222" stroke-width="1.300" d="M5 6h10v8H5zM5 7h10"/></svg></button>
    <button class="win" aria-label="Закрыть"><svg viewBox="0 0 20 20"><path stroke="#222" stroke-width="1.800" d="M6 6l8 8M14 6l-8 8"/></svg></button>
  </div>
</header>

<nav class="tabs">
  <button class="file">Файл</button>
  <button>Системы</button><button>Вставить</button><button>Аннотации</button><button>Анализ</button><button>Совместная работа</button><button>Вид</button><button>Управление</button><button>Надстройки</button><button>BIM ElectricalDesign</button><button>Elproject</button><button>OSTEC</button><button>Relux</button>
  <button class="active">Изменить | Электрооборудование</button>
  <span class="collapse"><svg viewBox="0 0 24 12"><rect x="1" y="2" width="11" height="7" rx="2" fill="#eee" stroke="#444"/><path fill="#333" d="M4 7l2.500-3L9 7zM17 4h5l-2.500 3z"/></svg></span>
</nav>

<section class="ribbon">
  <div class="panel p-select">
    <div class="body"><button class="big on"><svg><use href="#arrow"/></svg>Изменить</button></div>
    <h2>Выбор <svg class="tri8"><use href="#tri"/></svg></h2>
  </div>
  <div class="panel p-props">
    <div class="body"><div class="col2"><svg><use href="#props1"/></svg><svg class="on"><use href="#props2"/></svg></div></div>
    <h2>Свойства</h2>
  </div>
  <div class="panel p-clip">
    <div class="body"><button class="big off"><svg><use href="#paste"/></svg>Вставить<svg class="tri8"><use href="#tri"/></svg></button><div class="col3"><svg><use href="#cut"/></svg><svg><use href="#copy"/></svg><svg><use href="#match"/></svg></div></div>
    <h2>Буфер обмена</h2>
  </div>
  <div class="panel p-geo">
    <div class="body"><div class="col3 mid"><svg><use href="#cope"/></svg><svg><use href="#join"/></svg></div><div class="col3 mid arrows"><svg><use href="#dd"/></svg><svg><use href="#dd"/></svg></div><div class="col3"><svg><use href="#wjoin"/></svg><svg><use href="#beam"/></svg><svg><use href="#edit"/></svg></div><div class="col3"><svg><use href="#face"/></svg><svg><use href="#geo"/></svg><svg><use href="#hammer"/></svg></div><div class="col3 low arrows"><svg><use href="#dd"/></svg></div></div>
    <h2>Геометрия</h2>
  </div>
  <div class="panel p-modify">
    <div class="body"><div class="col2"><svg><use href="#align"/></svg><svg><use href="#move"/></svg></div><div class="col2"><svg><use href="#offset"/></svg><svg><use href="#copyel"/></svg></div><div class="col2"><svg><use href="#mir1"/></svg><svg><use href="#rot"/></svg></div><div class="col2"><svg><use href="#mir2"/></svg><svg><use href="#trimc"/></svg></div>
    <div class="col3"><svg><use href="#split"/></svg><svg><use href="#array"/></svg><svg><use href="#trim1"/></svg></div><div class="col3"><svg><use href="#splitg"/></svg><svg><use href="#scale"/></svg><svg><use href="#trim2"/></svg></div><div class="col3"><svg><use href="#unpin"/></svg><svg><use href="#pin"/></svg><svg><use href="#del"/></svg></div></div>
    <h2>Изменить</h2>
  </div>
  <div class="panel p-view">
    <div class="body"><div class="col3"><svg><use href="#bulb"/></svg><svg><use href="#brush"/></svg><svg><use href="#cutp"/></svg></div><div class="col3 arrows"><svg><use href="#dd"/></svg><svg><use href="#dd"/></svg></div><div class="col3"><svg><use href="#boxes"/></svg><svg><use href="#lw"/></svg></div></div>
    <h2>Вид</h2>
  </div>
  <div class="panel p-measure">
    <div class="body"><div class="col2"><svg><use href="#ruler"/></svg><svg><use href="#dimbig"/></svg></div><div class="col2 arrows"><svg><use href="#dd"/></svg><svg><use href="#dd"/></svg></div></div>
    <h2>Измерить</h2>
  </div>
  <div class="panel p-create">
    <div class="body"><div class="col2"><svg><use href="#grp"/></svg><svg><use href="#parts"/></svg></div><div class="col2"><svg><use href="#asm"/></svg><svg><use href="#sim"/></svg></div></div>
    <h2>Создание</h2>
  </div>
  <div class="panel p-mode">
    <div class="body"><button class="big"><svg><use href="#famedit"/></svg>Редактировать семейство</button></div>
    <h2>Режим</h2>
  </div>
  <button class="panel ctx"><svg><use href="#sched"/></svg>Электро...<svg class="tri8"><use href="#tri"/></svg></button>
  <button class="panel ctx"><svg><use href="#wplane"/></svg>Рабочая...<svg class="tri8"><use href="#tri"/></svg></button>
  <button class="panel ctx"><svg><use href="#place"/></svg>Размещ...<svg class="tri8"><use href="#tri"/></svg></button>
  <button class="panel ctx"><svg><use href="#syst"/></svg>Создан...<svg class="tri8"><use href="#tri"/></svg></button>
</section>

<section class="options">
  <strong>Изменить | Электрооборудование</strong>
  <label for="net">Тип питающей сети:</label>
  <select id="net"><option>Нет</option></select>
</section>

<main class="work">
  <aside class="props">
    <header class="phead"><h2>Свойства</h2><button class="x" aria-label="Закрыть"><svg viewBox="0 0 10 10"><path d="M1 1l8 8M9 1L1 9"/></svg></button></header>
    <button class="type">
      <svg class="thumb" viewBox="0 0 54 54"><path fill="#fff" d="M0 0h54v54H0z"/><path fill="#6d6d6d" stroke="#333" d="M3 25L21 14l19 11-18 11z"/><path fill="#444" stroke="#222" d="M3 25l19 11v11L3 36z"/><path fill="#3a3a3a" stroke="#222" d="M22 36l18-11v11L22 47z"/><path stroke="#7b7b7b" fill="none" d="M3 28l19 11 18-11"/><g fill="#505050" stroke="#1c1c1c"><ellipse cx="8" cy="35" rx="2" ry="3"/><ellipse cx="16" cy="39" rx="2" ry="3"/><ellipse cx="27" cy="39" rx="2" ry="3"/><ellipse cx="35" cy="35" rx="2" ry="3"/></g></svg>
      <span>862_Legrand_Коробка распределительная Plexo 105x105x55_<br>(ЭлОборуд_Грань)</span><svg class="tri8"><use href="#tri"/></svg>
    </button>
    <div class="filter"><select aria-label="Категория"><option>Электрооборудование (1)</option></select><button><svg><use href="#etype"/></svg>Изменить тип</button></div>
    <div class="listbox">
      <table>
        <colgroup><col class="c1"><col class="c2"><col class="c3"></colgroup>
        <tbody>
        <tr class="cat"><th colspan="2">Зависимости</th><td><svg><use href="#up2"/></svg></td></tr>
        <tr class="ro"><th>Основа</th><td>Связанная модель Revit : Ресторан.rvt</td><td></td></tr>
        <tr><th><label for="h">Смещение по высоте</label></th><td class="edit"><input id="h" type="text" value="2100.0"></td><td><button aria-label="Связать"></button></td></tr>
        <tr class="cat"><th colspan="2">Графика</th><td><svg><use href="#up2"/></svg></td></tr>
        <tr><th>Смещение_УГО_X</th><td>1200.0</td><td><button aria-label="Связать"></button></td></tr>
        <tr><th>Смещение_УГО_Y</th><td>1200.0</td><td><button aria-label="Связать"></button></td></tr>
        <tr class="cat"><th colspan="2">Электросети</th><td><svg><use href="#up2"/></svg></td></tr>
        <tr><th><label for="dz">Elproject_Дифференциальная защита_...</label></th><td><input id="dz" type="checkbox" checked disabled></td><td><button aria-label="Связать"></button></td></tr>
        <tr><th>Примечания в заголовке спецификац...</th><td></td><td></td></tr>
        <tr><th>Примечания в нижнем колонтитуле с...</th><td></td><td></td></tr>
        <tr class="cat"><th colspan="2">Электросети - Нагрузки</th><td><svg><use href="#up2"/></svg></td></tr>
        <tr><th>ADSK_Напряжение</th><td>220.00 В</td><td><button aria-label="Связать"></button></td></tr>
        <tr class="ro"><th>Установленная полная мощность</th><td>0.00 В·А</td><td></td></tr>
        <tr class="ro"><th>Расчетная нагрузка</th><td>0.00 В·А</td><td></td></tr>
        <tr class="ro"><th>Усредненный коэффициент спроса</th><td>100.0000%</td><td></td></tr>
        <tr class="ro"><th>Ток для установленной нагрузки</th><td>Не рассчитывается</td><td></td></tr>
        <tr class="ro"><th>Ip (ток для расчетной нагрузки)</th><td>Не рассчитывается</td><td></td></tr>
        <tr class="ro"><th>Полная установленная мощность, фа...</th><td>0.00 В·А</td><td></td></tr>
        <tr class="ro"><th>Полная установленная мощность, фа...</th><td>0.00 В·А</td><td></td></tr>
        <tr class="ro"><th>Полная установленная мощность, фа...</th><td>0.00 В·А</td><td></td></tr>
        <tr class="ro"><th>Ток, фаза A</th><td></td><td></td></tr>
        <tr class="ro"><th>Ток, фаза B</th><td></td><td></td></tr>
        <tr class="ro"><th>Ток, фаза C</th><td></td><td></td></tr>
        <tr class="cat"><th colspan="2">Размеры</th><td><svg><use href="#up2"/></svg></td></tr>
        <tr><th>Масштаб_УГО</th><td>30</td><td><button aria-label="Связать"></button></td></tr>
        <tr class="cat"><th colspan="2">Идентификация</th><td><svg><use href="#up2"/></svg></td></tr>
        </tbody>
      </table>
      <div class="vscroll"><svg viewBox="0 0 12 12"><path d="M3 8l3-3 3 3"/></svg><i class="t-props"></i><b></b><svg viewBox="0 0 12 12"><path d="M3 5l3 3 3-3"/></svg></div>
    </div>
    <footer class="pfoot"><a href="#">Справка по свойствам</a><button disabled>Применить</button></footer>
    <div class="ptabs"><button>Диспетчер проекта - Электрика Ревит</button><button class="on">Свойства</button></div>
  </aside>

  <section class="view">
    <div class="vtabs"><button class="vtab"><svg><use href="#plan"/></svg>1 этаж_ЭО<svg class="cx" viewBox="0 0 10 10"><path d="M1 1l8 8M9 1L1 9"/></svg></button><svg class="vmenu"><use href="#qmenu"/></svg></div>
    <div class="canvas">
      <svg class="draw" role="img" aria-label="План этажа">
        <g transform="translate(-414,-165)" fill="none">
          <g stroke="#a2a2a2">
            <path stroke-width="2" d="M484 478H546M785 478H877M899 478H1008M877 167V193M899 167V193M877 443V478M899 443V478M876 193H900M876 443H900M551 359V478M785 359V478M785 478V500M924 526V616M924 526H1022M878 616H925M1009 478V527M896 199.500H1017V204H897V199M896 433H1017V438H897V432"/>
            <path d="M427.500 401V437M545.500 358.500H551M779.500 358.500H785M545.500 358V478M779.500 358V478.500H785M545.500 484.500H551.500V527M779.500 527V484.500H785M785.500 484V527M545.500 560V604M551.500 560V603.500M779.500 560V603.500M785.500 560V604M879.500 193V199H897V193M879.500 443V438H897M1008 478.500H1022M1012.500 478V519M878 619.500H918M919.500 624V682M924.500 624V682M924.500 616V624"/>
            <path stroke-width="1.500" d="M1011 519h5v5h-5zM1016 521.500h6M917 618.500h5v5h-5z"/>
            <path stroke="#8e8e8e" stroke-width="1.200" d="M546 359A119.500 119.500 0 0 1 665.500 478M785 359A119.500 119.500 0 0 0 665.500 478M665.500 484Q665.500 506 658 526M665.500 484Q665.500 506 673 526M641 555Q631 569 617 580M690 555Q700 569 714 580M588 596Q570 603 546 604M743 596Q761 603 785 604M1015.500 204A119.500 115 0 0 1 896 318.500A119.500 114 0 0 1 1015.500 433"/>
          </g>
          <g stroke="#333">
            <path d="M545.500 167V290M545.500 326V362M545.500 398V543M545.500 580V616M545.500 652V682M887.500 167V290M887.500 326V362M887.500 398V543M887.500 580V616M887.500 652V682M427.500 339V401"/>
            <path d="M414 489.500H470M507 489.500H543M579 489.500H724M760 489.500H797M833 489.500H977M1014 489.500H1022"/>
          </g>
          <g stroke="#000" stroke-width="1.300">
            <path d="M580 284.500H648.500V352.500H580zM596.500 284V352M630.500 284V352"/>
            <circle cx="853.500" cy="170" r="11.300"/><circle cx="431.500" cy="524" r="11.300"/><circle cx="821.500" cy="471.500" r="7"/>
            <path d="M425 534L414 549M431.500 535V564H415"/>
            <path fill="#000" d="M414 437h70v41h-70z"/>
          </g>
          <path fill="#fff" d="M840 165h28v2h-28z"/>
          <g stroke="#c11620" stroke-width="1.300"><circle cx="470.500" cy="524" r="11.300"/><path d="M464 533L447.500 556L434 547.500M648.500 682V627.500H716.500V682"/><path stroke="#cf6a72" d="M666 628V682"/><path stroke="#8a3d5f" d="M700 628V682"/></g>
          <path stroke="#7d97dd" stroke-width="5" d="M414 501.500H877.500V682"/>
          <path stroke="#4a66ad" stroke-width="3" d="M414 501H546M785 501H877V682"/>
          <g fill="#3b62b8"><circle cx="545.500" cy="500" r="3"/><circle cx="839.500" cy="500" r="3"/></g>
          <path stroke="#5c80cc" d="M545.500 502v5M839.500 502v5"/>
          <path stroke="#22409a" d="M687.500 508v9M698.500 508v9M688 512.500h10"/>
          <path fill="#fff" stroke="#444" d="M569.500 499v11l2.500-2.500 2 4 2-1-2-4h3.500z"/>
          <path stroke="#777" d="M812 444L834 466"/><path stroke="#7b8bb8" d="M839.500 423V465"/>
          <path fill="#3a3a3a" d="M837 408h7l-2 3h2l-7 7 1-5h-3z"/>
          <g stroke="#1f4596" stroke-width="1.300"><path d="M796 441l2-3h9l3-9h-6l-5 9M807 438l-1 3M808 435v9M806 437l2-2 2 2M813 436v8M811 442l2 2 2-2"/></g>
          <path fill="#2550c0" stroke="#143a9c" d="M832 472a8 8 0 0 1 16 0z"/><path fill="#fff" stroke="#143a9c" d="M834.500 472.500h11v10h-11zM833 483.500h14M834 477h12M840 472v10"/><circle cx="840" cy="477" r="2.500" fill="#2550c0"/>
          <g class="lbl"><text x="839" y="357">Прочее</text><text x="839" y="372">0 В·А</text><text x="839" y="387" class="blue">220 В</text><text x="840" y="401">#1</text><text x="692" y="499" class="blue">2580.0</text></g>
          <text class="shield" x="458" y="330">ЦО</text>
        </g>
      </svg>
      <div class="navbar"><svg viewBox="0 0 22 76"><g fill="none" stroke="#999"><circle cx="18" cy="4" r="2"/><circle cx="18" cy="72" r="2"/><circle cx="10" cy="21" r="6"/><circle cx="10" cy="21" r="3"/><path d="M4 39h16"/></g><text x="12" y="29">2D</text><path fill="#9fca8d" stroke="#78a868" d="M7 44h7v7H7z"/><circle cx="14" cy="52" r="2" fill="#fff" stroke="#888"/><path fill="#888" d="M10 34h3l-1.500 2zM10 61h3l-1.500 2z"/></svg></div>
      <div class="vscroll"><svg viewBox="0 0 12 12"><path d="M3 8l3-3 3 3"/></svg><b></b><i></i><b></b><svg viewBox="0 0 12 12"><path d="M3 5l3 3 3-3"/></svg></div>
    </div>
    <div class="vbar">
      <button class="scale">1 : 100</button>
      <div class="vicons"><svg><use href="#v1"/></svg><svg><use href="#v2"/></svg><svg><use href="#v3"/></svg><svg><use href="#v4"/></svg><svg><use href="#v5"/></svg><svg><use href="#v6"/></svg><svg><use href="#v7"/></svg><svg><use href="#v8"/></svg><svg><use href="#v9"/></svg><svg><use href="#v10"/></svg><svg><use href="#v11"/></svg></div>
      <div class="hscroll"><svg viewBox="0 0 12 12"><path d="M8 3L5 6l3 3"/></svg><b></b><i></i><b></b><svg viewBox="0 0 12 12"><path d="M5 3l3 3-3 3"/></svg></div><span class="grip"></span>
    </div>
  </section>

  <aside class="browser">
    <header class="phead"><h2>Диспетчер инженерных систем - Электрика Р...</h2><button class="x" aria-label="Закрыть"><svg viewBox="0 0 10 10"><path d="M1 1l8 8M9 1L1 9"/></svg></button></header>
    <div class="btools"><select class="w1" aria-label="Вид"><option>Системы</option></select><select class="w2" aria-label="Дисциплина"><option>Электросети</option></select><button aria-label="Автоподбор"><svg><use href="#tb1"/></svg></button><button aria-label="Столбцы"><svg><use href="#tb2"/></svg></button></div>
    <div class="tree">
      <table>
        <colgroup><col><col class="c2"></colgroup>
        <thead><tr><th>Системы</th><th>Имя про</th></tr></thead>
        <tbody>
        <tr class="sel"><td><div><button aria-label="Развернуть">+</button><svg><use href="#folderq"/></svg>Не назначено (46 элементов)</div></td><td></td></tr>
        <tr><td><div><button aria-label="Свернуть">−</button><svg><use href="#folder"/></svg>Электросети (Систем : 1)</div></td><td></td></tr>
        <tr><td><div class="l1"><button aria-label="Свернуть">−</button><svg><use href="#power"/></svg>Мощность</div></td><td></td></tr>
        <tr><td><div class="l2"><button aria-label="Развернуть">+</button><svg><use href="#panelb"/></svg>&lt;без имени&gt;</div></td><td></td></tr>
        </tbody>
      </table>
    </div>
    <div class="hscroll"><svg viewBox="0 0 12 12"><path d="M8 3L5 6l3 3"/></svg><i></i><b></b><svg viewBox="0 0 12 12"><path d="M5 3l3 3-3 3"/></svg></div>
  </aside>
</main>

<footer class="status">
  <span class="msg">Пространства : Пространства : Пространство : Зона основная 23</span>
  <svg><use href="#s1"/></svg>
  <select class="ws" aria-label="Рабочий набор"><option>Рабочее освещение</option></select>
  <svg class="req"><use href="#s2"/></svg><span class="n0">:0</span>
  <svg><use href="#s3"/></svg><svg><use href="#s4"/></svg>
  <select class="model" aria-label="Вариант" disabled><option>Главная модель</option></select>
  <label class="only"><input type="checkbox">Только редактируемые</label>
  <div class="tools"><svg><use href="#t1"/></svg><svg><use href="#t2"/></svg><svg><use href="#t3"/></svg><svg><use href="#t4"/></svg><svg><use href="#t5"/></svg><svg><use href="#t6"/></svg><svg><use href="#t7"/></svg></div><span>:1</span>
</footer>

<div class="brand rubezh"><svg viewBox="0 0 84 64"><path fill="#345f92" fill-rule="evenodd" d="M20 1l6 6h56l-9 30H50l30 26-18-3-24-22H0zM34 14l-7 18h15l3-9h-7l2-4h22l-4 13h8l5-18z"/></svg><span>RUBEZH</span></div>
<div class="brand vysotskiy"><svg viewBox="0 0 62 54"><path fill="#c2605c" d="M0 0h62L31 52z"/><path fill="#e9efdf" d="M9 5h10l12 24L43 5h10L31 43z"/></svg><span class="vname">VYSOTSKIY</span><span class="vsub">C O N S U L T I N G</span></div>
<div class="brand credits"><span>Vysotskiy consulting</span><span>RUBEZH</span><span>www.bim.vc</span><span>www.td.rubezh.ru</span></div>
<div class="brand course"><p>Видеокурс "Autodesk Revit. Электрика: Продвинутый уровень"</p><p>Блок "Создание электрических цепей"</p><p>Урок "Выключатели освещения и распределительные коробки"</p></div>
</body>
</html>
```
FILE: styles.css
```css
* { box-sizing: border-box; }
body {
  margin: 0;
  height: 100vh;
  display: flex;
  flex-direction: column;
  background: #cccccc;
  color: #3c3c3c;
  font: 10px/16px Roboto, "Noto Sans", sans-serif;
  overflow: hidden;
  position: relative;
}
h1, h2, p { margin: 0; font: inherit; }
button, input, select { font: inherit; color: inherit; margin: 0; }
button { border: 0; background: none; padding: 0; white-space: nowrap; }
svg { display: block; flex: none; }
i, b { font-style: normal; }
.defs { position: absolute; width: 0; height: 0; }
select {
  appearance: none;
  border: 1px solid #c0c0c0;
  border-radius: 0;
  padding: 0 16px 0 2px;
  background: #e4e4e4 url("data:image/svg+xml,%3Csvg xmlns='http://www.w3.org/2000/svg' width='8' height='6'%3E%3Cpath d='M1 1l3 3 3-3' fill='none' stroke='%23777'/%3E%3C/svg%3E") no-repeat right 2px center;
}

/* Title bar */
.titlebar { display: flex; align-items: center; height: 28px; padding-left: 3px; }
.quick, .service { display: flex; align-items: center; }
.quick button, .service button { width: 20px; height: 20px; }
.quick svg, .service svg { width: 100%; height: 100%; }
.titlebar button.dd { width: 10px; }
.quick .after { margin-right: 3px; }
.quick .qm { width: 18px; }
.quick .letter { font: 700 16px/20px "Open Sans", sans-serif; color: #444; }
.sep { width: 1px; height: 18px; background: #b5b5b5; margin: 0 3px; }
.titlebar h1 { flex: 1; text-align: center; line-height: 24px; padding-bottom: 4px; white-space: nowrap; }
.tri { font-size: 7px; width: 11px; color: #333; }
.search { width: 150px; height: 19px; border: 1px solid #555; background: #fff; padding: 0 1px; font-style: italic; }
.search::placeholder { color: #777; opacity: 1; }
.service .login { width: auto; }
.service .cart { margin-left: 3px; }
.service .win { width: 21px; }
.service .last { margin-right: 9px; }
.service { padding-right: 3px; }

/* Ribbon tabs */
.tabs { display: flex; height: 17px; padding-left: 3px; }
.tabs button { padding: 0 8px; line-height: 17px; height: 17px; }
.tabs .file { background: #2f7fb5; color: #fff; width: 38px; padding: 0; margin-right: 1px; }
.tabs .active { background: #e5efd8; padding: 0 7px; }
.collapse { margin-left: auto; padding: 3px 0 0; }
.collapse svg { width: 24px; height: 12px; }

/* Ribbon */
.ribbon { display: flex; height: 80px; margin: 0 2px 0 3px; background: #e5efd8; border-bottom: 1px solid #d3ddc9; }
.panel { background: #eeeeee; display: flex; flex-direction: column; height: 79px; flex: none; }
.panel h2 { display: flex; align-items: center; justify-content: center; gap: 4px; height: 14px; line-height: 14px; white-space: nowrap; }
.body { flex: 1; display: flex; padding-top: 2px; justify-content: center; }
.big { display: flex; flex-direction: column; align-items: center; height: 61px; white-space: normal; line-height: 13px; }
.big svg, .ctx svg { width: 28px; height: 32px; }
.panel svg.tri8, .type svg.tri8 { width: 8px; height: 8px; }
.big.on { width: 51px; background: #b9d7f2; border: 1px solid #5a9ad0; }
.big.off { color: #aaa; width: 52px; }
.col2, .col3 { display: flex; flex-direction: column; }
.col2 svg { width: 33px; height: 30px; padding: 2px; }
.col2 svg.on { background: #bcd9f1; border: 1px solid #5a9ad0; }
.col3 svg { width: 21px; height: 20px; padding: 1px; }
.col3.mid { padding-top: 10px; }
.col3.low { padding-top: 20px; }
.col2.arrows svg, .col3.arrows svg { width: 10px; padding: 0; }
.p-select { width: 54px; }
.p-props { width: 53px; }
.p-clip { width: 83px; }
.p-geo { width: 88px; }
.p-modify { width: 199px; }
.p-view { width: 55px; }
.p-measure { width: 52px; }
.p-create { width: 69px; }
.p-mode { width: 81px; }
.p-mode h2 { background: #e5efd8; }
.p-mode .big { width: 72px; }
.ctx { width: 51px; background: #e5efd8; border-right: 1px solid #cfdac4; border-left: 1px solid #d9e4cd; align-items: center; line-height: 13px; padding: 2px 0 3px; }
.ctx .tri8 { margin-top: auto; }

/* Options bar */
.options { display: flex; align-items: center; height: 23px; margin: 0 2px 0 3px; background: #e5efd8; }
.options strong { font-weight: 400; padding-left: 6px; width: 198px; border-right: 1px solid #b3bda9; line-height: 20px; white-space: nowrap; }
.options label { padding: 0 3px 0 22px; white-space: nowrap; }
.options select { width: 83px; height: 18px; }

/* Docked panels */
.work { flex: 1; display: flex; min-height: 0; padding: 0 3px; }
.phead { display: flex; align-items: center; justify-content: space-between; height: 17px; }
.phead h2 { padding-left: 2px; white-space: nowrap; overflow: hidden; }
.x { width: 15px; height: 15px; padding: 3px; }
.x svg, .cx { width: 9px; height: 9px; stroke: #222; stroke-width: 1.5; fill: none; }
.props { width: 408px; flex: none; display: flex; flex-direction: column; background: #f0f0f0; }
.type { display: flex; align-items: center; height: 58px; text-align: left; line-height: 13px; color: #555; border-top: 1px solid #ddd; }
.type .thumb { width: 56px; height: 56px; border: 1px solid #ccc; margin: 0 3px; }
.type .tri8 { margin: 0 3px 0 auto; }
.filter { display: flex; align-items: center; justify-content: space-between; height: 20px; }
.filter select { width: 318px; height: 18px; }
.filter button { display: flex; align-items: center; padding-right: 6px; }
.filter svg { width: 16px; height: 16px; }
.listbox { flex: 1; min-height: 0; display: flex; overflow: hidden; padding-right: 2px; }
.listbox table { flex: 1; min-width: 0; width: 100%; table-layout: fixed; border-collapse: separate; border-spacing: 0; height: 0; background: #fff; }
.c1 { width: 191px; }
.c3 { width: 10px; }
.listbox th, .listbox td { height: 16px; line-height: 15px; padding: 0 0 0 6px; text-align: left; font-weight: 400; border-bottom: 1px dashed #ccc; white-space: nowrap; overflow: hidden; }
.listbox td { padding-left: 1px; border-left: 1px dashed #ccc; }
.listbox td + td { padding: 0; }
.listbox .cat th, .listbox .cat td { background: #dcdcdc; border: 0; padding-left: 1px; line-height: 16px; }
.listbox .cat td { padding: 2px 0 0; vertical-align: top; }
.cat svg { width: 8px; height: 8px; }
.listbox .ro th, .listbox .ro td { color: #888; }
.listbox td button { display: block; width: 8px; height: 14px; background: #e0e0e0; border: 1px solid #aaa; }
.listbox .edit { padding: 0; }
.edit input { display: block; width: 100%; height: 15px; border: 1px solid #222; padding: 0; background: #fff; }
.listbox input[type="checkbox"] {
  appearance: none;
  display: block;
  width: 11px;
  height: 11px;
  margin: 0 0 0 1px;
  border: 1px solid #c4c4c4;
  background: #fff url("data:image/svg+xml,%3Csvg xmlns='http://www.w3.org/2000/svg' width='9' height='9'%3E%3Cpath d='M1.500 4.500l2 2.500L8 2' fill='none' stroke='%23bbb'/%3E%3C/svg%3E") no-repeat center;
}
.vscroll { width: 13px; flex: none; display: flex; flex-direction: column; background: #f0f0f0; }
.vscroll svg, .hscroll svg { width: 13px; height: 13px; stroke: #444; stroke-width: 1.3; fill: none; }
.vscroll b, .hscroll b { flex: 1; }
.vscroll i, .hscroll i { background: #cdcdcd; }
.vscroll .t-props { height: 152px; }
.pfoot { display: flex; align-items: center; justify-content: space-between; height: 22px; padding: 0 3px 2px 2px; }
.pfoot a { color: #2a75b8; }
.pfoot button { width: 57px; height: 17px; background: #cfcfcf; border: 1px solid #c2c2c2; color: #888; }
.ptabs { display: flex; background: #ccc; height: 19px; }
.ptabs button { padding: 0 4px; height: 17px; }
.ptabs .on { background: #f0f0f0; padding: 0 5px; }

/* Drawing view */
.view { flex: 1; min-width: 0; display: flex; flex-direction: column; margin: 0 3px; border-right: 1px solid #bbb; background: #ccc; }
.vtabs { display: flex; justify-content: space-between; height: 17px; }
.vtab { display: flex; align-items: center; width: 105px; background: #fff; font-family: "Noto Sans", sans-serif; font-weight: 700; color: #222; }
.vtab svg { width: 18px; height: 18px; margin-right: 4px; }
.vtab .cx { width: 9px; height: 9px; margin: 0 4px 0 auto; }
.vmenu { width: 15px; height: 16px; }
.canvas { flex: 1; min-height: 0; display: flex; background: #fff; position: relative; }
.draw { flex: 1; min-width: 0; height: 100%; overflow: hidden; }
.canvas .vscroll i { height: 14px; }
.lbl text { font: 9px "Liberation Sans", sans-serif; fill: #555; text-anchor: middle; }
.lbl .blue { fill: #2b4a8c; }
.shield { font: italic 400 38px Roboto, sans-serif; fill: #000; text-anchor: end; }
.navbar { position: absolute; top: 2px; right: 15px; width: 23px; height: 78px; border: 1px solid #aaa; border-radius: 3px; background: rgba(240, 240, 240, .6); }
.navbar svg { width: 100%; height: 100%; }
.navbar text { font: bold 6px "Liberation Sans", sans-serif; fill: #6484b8; }
.vbar { display: flex; align-items: center; height: 15px; background: #f0f0f0; }
.scale { width: 60px; font: 9px "Noto Sans", sans-serif; }
.vicons { display: flex; }
.vicons svg { width: 16px; height: 15px; margin-right: 1px; }
.hscroll { display: flex; align-items: center; height: 13px; background: #f0f0f0; }
.hscroll i { height: 13px; }
.vbar .hscroll { flex: 1; }
.vbar .hscroll i { width: 14px; }
.grip { width: 13px; height: 13px; background: radial-gradient(circle, #bbb 1px, transparent 1px) 0 0 / 4px 4px; clip-path: polygon(100% 0, 100% 100%, 0 100%); }

/* System browser */
.browser { width: 237px; flex: none; display: flex; flex-direction: column; background: #f0f0f0; padding-bottom: 1px; }
.browser .phead { border-bottom: 1px solid #ddd; }
.btools { display: flex; align-items: center; height: 27px; padding-left: 14px; }
.btools select { height: 19px; padding-left: 2px; }
.w1 { width: 68px; margin-right: 5px; }
.w2 { width: 93px; margin-right: 10px; }
.btools button { width: 18px; height: 18px; }
.btools svg { width: 18px; height: 18px; }
.tree { flex: 1; background: #fff; overflow: hidden; }
.tree table { width: 100%; table-layout: fixed; border-collapse: separate; border-spacing: 0; }
.tree .c2 { width: 39px; }
.tree th { font-weight: 400; font-size: 9px; text-align: left; height: 17px; line-height: 17px; padding: 0 0 0 3px; border-right: 1px solid #ddd; white-space: nowrap; overflow: hidden; }
.tree td { height: 15px; padding: 0; border-bottom: 1px solid #c4c4c4; border-right: 1px solid #ccc; }
.tree td div { display: flex; align-items: center; height: 14px; line-height: 14px; padding-left: 3px; white-space: nowrap; }
.tree td .l1 { padding-left: 20px; }
.tree td .l2 { padding-left: 37px; }
.tree svg { width: 15px; height: 14px; margin: 0 3px 0 5px; }
.tree button { width: 9px; height: 9px; font-size: 9px; line-height: 7px; border: 1px solid #888; background: #fff; color: #333; }
.tree .sel td { background: #0a36b4; color: #fff; border-bottom-color: #0a36b4; }
.tree .sel button { background: #2a50c0; border-color: #7d93dd; color: #fff; }
.browser .hscroll i { width: 96px; }

/* Status bar */
.status { display: flex; align-items: center; height: 22px; padding: 0 4px; white-space: nowrap; }
.status svg { width: 19px; height: 19px; }
.msg { width: 342px; }
.status select { height: 17px; background-color: #fff; border-color: #e4e4e4; }
.ws { width: 171px; margin-left: 3px; }
.status .req { margin-left: 4px; }
.n0 { width: 20px; }
.model { width: 172px; margin-left: 2px; color: #999; opacity: 1; }
.only { display: flex; align-items: center; margin-left: auto; }
.only input { appearance: none; width: 12px; height: 12px; margin: 0 3px 0 0; border: 1px solid #444; background: #f2f2f2; }
.tools { display: flex; margin-left: 5px; }
.status .tools svg { width: 20px; }
.tools + span { width: 70px; }

/* Watermarks */
.brand { position: absolute; pointer-events: none; }
.rubezh { left: 38px; top: 40px; display: flex; opacity: .42; color: #456c9d; }
.rubezh svg { width: 84px; height: 64px; }
.rubezh span { font: italic 700 36px/44px "DejaVu Sans", sans-serif; }
.vysotskiy { right: 10px; top: 36px; width: 139px; opacity: .5; display: flex; flex-direction: column; align-items: center; color: #76836c; }
.vysotskiy svg { width: 62px; height: 54px; }
.vname { font: 900 26px/40px Roboto, sans-serif; }
.vsub { font: 8px/12px "Liberation Sans", sans-serif; width: 132px; text-align: justify; text-align-last: justify; }
.credits { left: 4px; top: 646px; display: grid; grid-template-columns: 164px auto; font: 700 15px/19px "Noto Sans", sans-serif; color: rgba(150, 150, 150, .45); white-space: nowrap; }
.course { right: 19px; top: 621px; text-align: right; font: 700 17px/21px "Open Sans", sans-serif; color: rgba(195, 198, 195, .7); white-space: nowrap; }
```
